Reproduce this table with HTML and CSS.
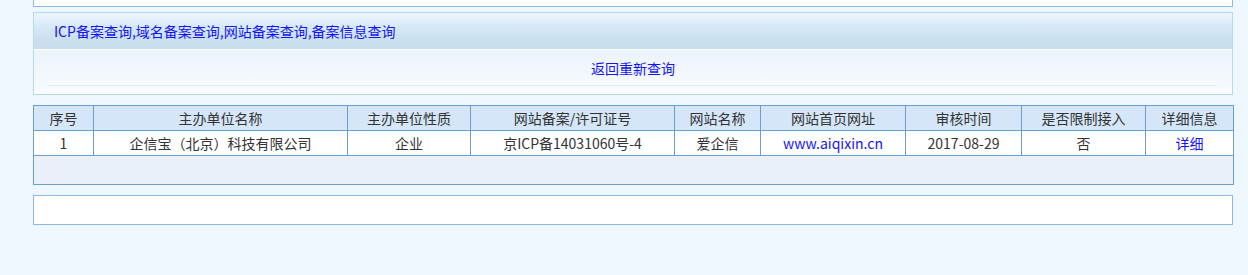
FILE: index.html
```html
<!DOCTYPE html>
<html lang="zh-CN">
<head>
<meta charset="utf-8">
<title>ICP备案查询</title>
<link rel="stylesheet" href="styles.css">
</head>
<body>
<div class="page">
  <div class="top-box"></div>
  <div class="panel">
    <div class="panel-head"><a class="head-link" href="#">ICP备案查询,域名备案查询,网站备案查询,备案信息查询</a></div>
    <div class="panel-body">
      <div class="back-row"><a class="back-link" href="#">返回重新查询</a></div>
      <div class="panel-rule"></div>
    </div>
  </div>
  <table class="result">
    <colgroup>
      <col class="c1"><col class="c2"><col class="c3"><col class="c4"><col class="c5"><col class="c6"><col class="c7"><col class="c8"><col class="c9">
    </colgroup>
    <thead>
      <tr>
        <th>序号</th><th>主办单位名称</th><th>主办单位性质</th><th>网站备案/许可证号</th><th>网站名称</th><th>网站首页网址</th><th>审核时间</th><th>是否限制接入</th><th>详细信息</th>
      </tr>
    </thead>
    <tbody>
      <tr>
        <td>1</td><td>企信宝（北京）科技有限公司</td><td>企业</td><td>京ICP备14031060号-4</td><td>爱企信</td><td><a class="link" href="#">www.aiqixin.cn</a></td><td>2017-08-29</td><td>否</td><td><a class="link" href="#">详细</a></td>
      </tr>
      <tr class="empty-row"><td colspan="9"></td></tr>
    </tbody>
  </table>
  <div class="bottom-box"></div>
</div>
</body>
</html>
```

FILE: styles.css
```css
html, body {
  margin: 0;
  padding: 0;
  background: #eef6fe;
}
body {
  font-family: "Noto Sans CJK SC", "Noto Sans", sans-serif;
  font-size: 14px;
  color: #333;
}
a { text-decoration: none; }
.page {
  width: 1200px;
  margin-left: 33px;
  display: flex;
  flex-direction: column;
}
.top-box {
  height: 6px;
  background: #fff;
  border: 1px solid #8ab9e8;
  border-top: none;
  margin-bottom: 5px;
}
.panel {
  border: 1px solid #b7d9ee;
  display: flex;
  flex-direction: column;
}
.panel-head {
  height: 36px;
  display: flex;
  align-items: center;
  padding-left: 20px;
  background: linear-gradient(to bottom, #ecf5fd 0%, #d9eaf7 35%, #c9e0ef 70%, #c7deee 100%);
  border-bottom: 1px solid #ffffff;
}
.head-link {
  color: #1414f5;
  font-size: 14px;
  line-height: 1;
}
.panel-body {
  height: 44px;
  background: linear-gradient(to bottom, #ebf3fb 0%, #f8fbfe 100%);
  display: flex;
  flex-direction: column;
}
.back-row {
  height: 35px;
  display: flex;
  align-items: center;
  justify-content: center;
}
.back-link {
  color: #1414f5;
  font-size: 14px;
  line-height: 1;
}
.panel-rule {
  height: 1px;
  margin: 0 15px 0 15px;
  background: #e1ebf3;
}
.result {
  margin-top: 10px;
  width: 1200px;
  border-collapse: collapse;
  table-layout: fixed;
  border: 1px solid #6a9fd1;
}
.result th, .result td {
  border: 1px solid #6a9fd1;
  text-align: center;
  padding: 0;
  font-size: 14px;
  line-height: 1;
  white-space: nowrap;
  overflow: hidden;
}
.result th {
  height: 24px;
  background: #d4e6f8;
  font-weight: normal;
  color: #333;
}
.result td {
  height: 24px;
  background: #fff;
}
.result .empty-row td {
  height: 28px;
  background: #e9f0f9;
}
.c1 { width: 60px; }
.c2 { width: 254px; }
.c3 { width: 123px; }
.c4 { width: 204px; }
.c5 { width: 86px; }
.c6 { width: 145px; }
.c7 { width: 116px; }
.c8 { width: 124px; }
.c9 { width: 88px; }
.link { color: #1414f5; }
.bottom-box {
  margin-top: 10px;
  height: 28px;
  background: #fff;
  border: 1px solid #8db8e4;
}
```
